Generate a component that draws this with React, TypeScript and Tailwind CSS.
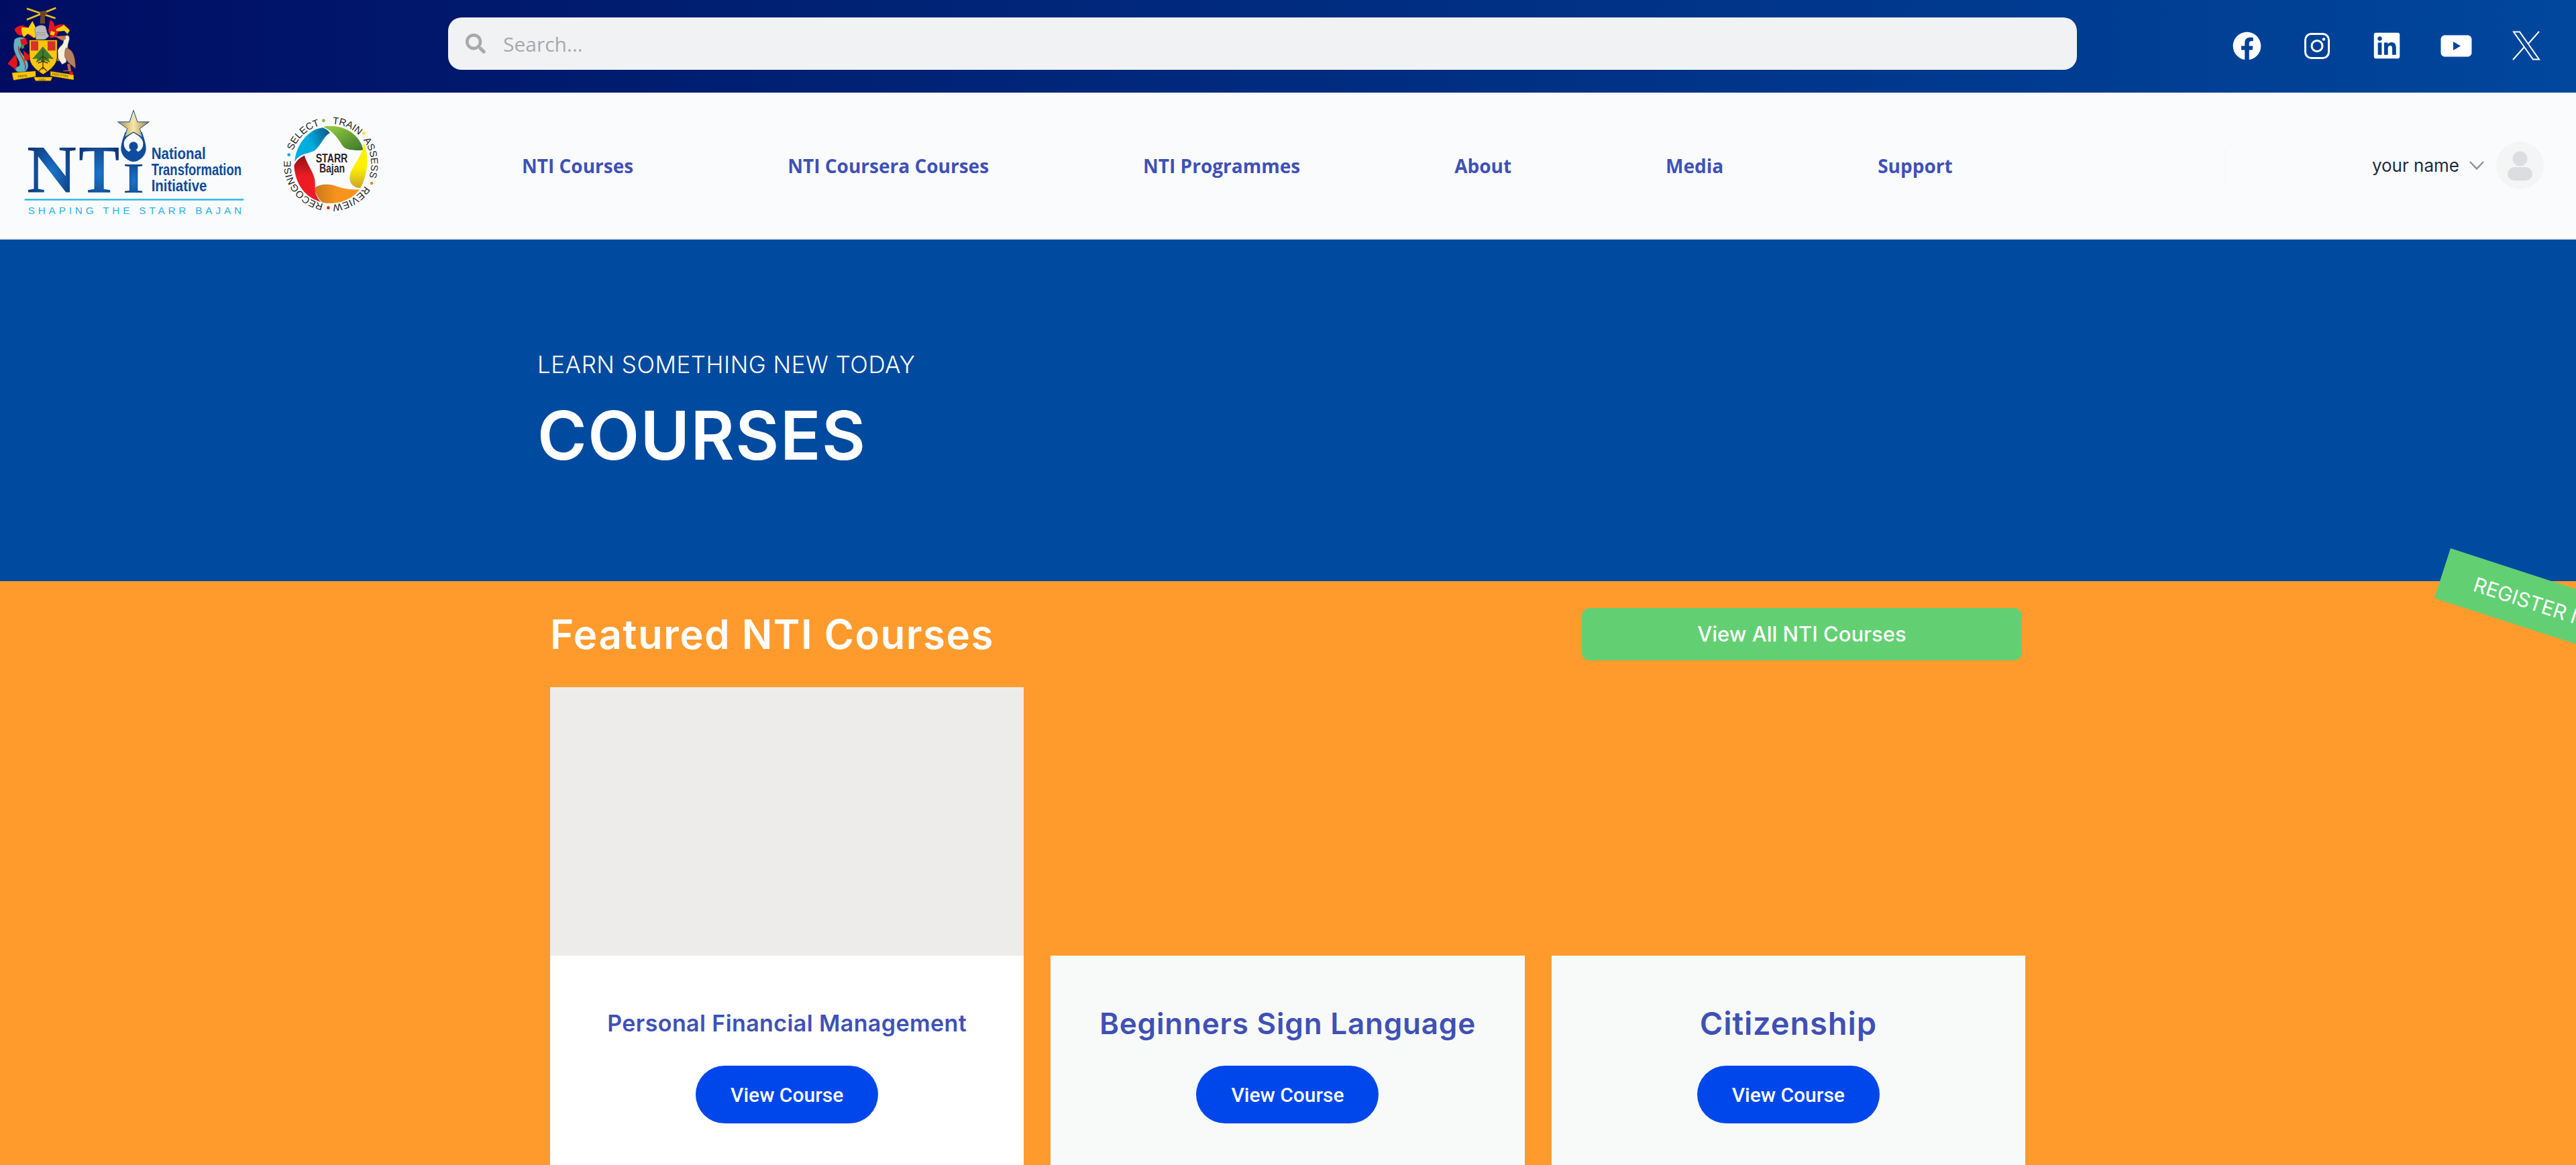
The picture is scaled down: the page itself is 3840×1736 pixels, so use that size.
import { FaFacebook, FaLinkedin, FaSearch } from "react-icons/fa";

const NAV_ITEMS = ["NTI Courses", "NTI Coursera Courses", "NTI Programmes", "About", "Media", "Support"];

const COURSES = [
  { title: "Personal Financial Management", image: true, titleClass: "text-[34px] tracking-[0.4px]", bodyClass: "bg-white" },
  { title: "Beginners Sign Language", image: false, titleClass: "text-[44px] tracking-[0.8px]", bodyClass: "bg-[#f8faf9]" },
  { title: "Citizenship", image: false, titleClass: "text-[47px] tracking-[0.9px]", bodyClass: "bg-[#f8faf9]" },
];

function CoatOfArms() {
  return (
    <svg viewBox="0 0 390 390" className="w-[130px] h-[130px] shrink-0">
      {/* crossed cane and arm */}
      <path d="M120 38L248 82M120 88L250 35" stroke="#e8c21a" strokeWidth="8" />
      <path d="M176 52l30-4 6 14-12 8 2 36h-24l4-36z" fill="#6e4524" />
      {/* mantling */}
      <path d="M65 132c10-14 28-22 44-16l24 14 24 28-8 12-28-18-16 4c-14 6-30 2-40-24z" fill="#e8141c" />
      <path d="M97 122l30 2 18-30 12 24 8 24-4 22-8 6-14-12-14-8-18 16c-10-10-12-30-10-44z" fill="#fcd20e" />
      <path d="M216 134l8-44c14 4 18 14 20 28 14-8 30-12 44-8l24 22-28 4-22 4-12 26-24 4z" fill="#e8141c" />
      <path d="M254 128c12-6 24-8 30-18l28 26-10 16-14-14-24 2-14-2z" fill="#fcd20e" />
      <path d="M228 138l18 6-6 16-16-6z" fill="#fcd20e" />
      {/* helmet */}
      <path d="M155 130c6-16 32-22 48-12l8 30 8 14-18 14-26 8-14-8-2-22z" fill="#b9babc" stroke="#77787a" strokeWidth="2" />
      <path d="M160 146h44M160 156h44" stroke="#88898b" strokeWidth="2" />
      {/* dolphin */}
      <path d="M64 178c8-12 32-16 50-6l6 24-24 10-8 14c6 20 26 34 36 60 6 22-2 40-24 46-18 0-30-8-38-24l22-6c6-6 4-14 0-24-10-20-28-50-22-78z" fill="#62b5bf" stroke="#1d4f55" strokeWidth="2" />
      <path d="M84 206c-6 20 10 40 20 60 8 18 14 34 8 46" fill="none" stroke="#c9302c" strokeWidth="5" />
      <path d="M34 285l36-44 8 36-6 34zM104 226l30 22 4 18-28 6zM90 176l26-4 8 24-26 14z" fill="#e3131b" />
      <path d="M92 204l14-6 2 16-10 6z" fill="#2ca53a" />
      {/* pelican */}
      <path d="M290 162c12-8 22-2 20 12-2 16-10 28-6 44l-8 60-18 10-18-26-2-34c4-20 26-24 26-44z" fill="#f6f1dd" stroke="#6e6552" strokeWidth="2" />
      <path d="M296 214c24 6 40 24 42 92l-34-28-14-24c0-16 0-30 6-40z" fill="#b9805c" stroke="#5d4330" strokeWidth="2" />
      <path d="M244 162l50-2v14l-14 8z" fill="#c9794a" />
      <path d="M300 286l5 28-24 2 4 3h34l-6-33z" fill="#c7653c" />
      <path d="M246 256l16 4 4 14-16-2z" fill="#b9673c" />
      {/* motto scroll */}
      <path d="M53 325l107-8v26l-100 16z" fill="#fbc70f" stroke="#3f2e06" strokeWidth="2" />
      <path d="M150 344h85l-8 18h-68z" fill="#fbc70f" stroke="#3f2e06" strokeWidth="2" />
      <path d="M225 318l105 16v24l-105-18z" fill="#fbc70f" stroke="#3f2e06" strokeWidth="2" />
      <path d="M310 320h16v14h-16z" fill="#d5201f" />
      {/* shield */}
      <path d="M131 178h125v76c0 36-32 60-63 79-31-19-62-43-62-79z" fill="#fcc510" stroke="#201a08" strokeWidth="3" />
      <rect x="138" y="184" width="33" height="42" fill="#d5332a" />
      <rect x="213" y="184" width="35" height="42" fill="#d5332a" />
      <path d="M192 208l22 26 26 30-24-2 8 18-22-10-10 12-10-12-22 10 8-18-24 2 26-30z" fill="#3c7d2c" />
      <path d="M192 226v84M192 300l-18 18M192 300l18 18M192 252l-16 10M192 252l16 10M192 274l-22 8M192 274l22 8" stroke="#4a3014" strokeWidth="4" fill="none" />
      <g fontFamily="Liberation Serif, serif" fontSize="15" fill="#3a2a06">
        <text x="80" y="347" transform="rotate(-6 80 347)">PRIDE</text>
        <text x="170" y="359">AND</text>
        <text x="232" y="335" transform="rotate(9 232 335)">INDUSTRY</text>
      </g>
    </svg>
  );
}

function NtiLogo() {
  return (
    <svg viewBox="0 0 1020 525" className="w-[340px] h-[175px] shrink-0">
      <defs>
        <radialGradient id="ntiBlue" cx="50%" cy="55%" r="60%">
          <stop offset="0%" stopColor="#1a75cc" />
          <stop offset="100%" stopColor="#0a2e6c" />
        </radialGradient>
        <linearGradient id="ntiGold" x1="0" y1="0" x2="1" y2="0">
          <stop offset="0%" stopColor="#b08a38" />
          <stop offset="50%" stopColor="#f6e7ac" />
          <stop offset="100%" stopColor="#a07e30" />
        </linearGradient>
      </defs>
      <g fontFamily="Liberation Serif, serif" fontWeight="700" fill="url(#ntiBlue)">
        <text x="30" y="395" fontSize="303" textLength="222" lengthAdjust="spacingAndGlyphs">N</text>
        <text x="262" y="395" fontSize="303" textLength="183" lengthAdjust="spacingAndGlyphs">T</text>
        <text x="460" y="395" fontSize="192" textLength="95" lengthAdjust="spacingAndGlyphs">I</text>
      </g>
      <path d="M470 125C455 165 448 190 452 210C458 240 490 258 507 258C525 258 556 240 562 210C566 190 558 165 545 125Z" fill="#0f4c9e" />
      <path d="M507 128C530 142 552 155 550 180C549 200 535 212 523 214H491C479 212 465 200 464 180C462 155 484 142 507 128Z" fill="#fafbfd" />
      <circle cx="507" cy="189" r="20" fill="#0f4c9e" />
      <rect x="488" y="206" width="38" height="34" rx="10" fill="#0f4c9e" />
      <path d="M507 28L525 80H577L535 110L548 150L507 125L466 150L479 110L437 80H489Z" fill="url(#ntiGold)" stroke="#0f4c9e" strokeWidth="3" />
      <g fontFamily="Liberation Sans, sans-serif" fontWeight="700" fontSize="70" fill="#0f4a9a">
        <text x="587" y="247" textLength="243" lengthAdjust="spacingAndGlyphs">National</text>
        <text x="587" y="318" textLength="403" lengthAdjust="spacingAndGlyphs">Transformation</text>
        <text x="587" y="390" textLength="248" lengthAdjust="spacingAndGlyphs">Initiative</text>
      </g>
      <rect x="20" y="424" width="980" height="7" fill="#22b2e6" />
      <text x="35" y="493" textLength="955" fontFamily="Liberation Sans, sans-serif" fontSize="46" fill="#25b4ea">
        SHAPING THE STARR BAJAN
      </text>
    </svg>
  );
}

function StarrLogo() {
  const petals = [
    { id: "starrGreen", from: "#8cc63f", to: "#3f7a2a", x1: 0.2, y1: 0.1, x2: 1, y2: 0.9, d: "M215 78C280 62 375 95 395 182C372 182 320 190 300 160C280 125 255 95 215 78Z" },
    { id: "starrYellow", from: "#fff000", to: "#c9a52a", x1: 0.5, y1: 0.55, x2: 0.5, y2: 1, d: "M398 150C425 220 410 300 382 352C358 352 325 335 336 290C345 250 392 210 398 150Z" },
    { id: "starrOrange", from: "#c9781a", to: "#f7941d", x1: 0, y1: 0.5, x2: 0.5, y2: 0.5, d: "M378 358C340 410 270 428 212 416C190 395 178 370 178 350C205 330 245 332 280 345C315 358 345 360 378 358Z" },
    { id: "starrRed", from: "#8e0f16", to: "#ed1c24", x1: 0.5, y1: 0, x2: 0.5, y2: 0.45, d: "M205 414C140 395 90 340 85 250C95 230 115 212 132 206C140 240 170 275 178 315C182 350 170 378 205 414Z" },
    { id: "starrBlue", from: "#00aee0", to: "#0a5f8e", x1: 0.45, y1: 0.5, x2: 1, y2: 0.3, d: "M88 235C92 160 150 88 212 82C225 85 238 95 246 106C220 115 205 165 175 185C145 200 110 195 88 235Z" },
  ];
  const words = [
    { word: "TRAIN", at: 56.4 },
    { word: "ASSESS", at: 72.5 },
    { word: "REVIEW", at: 91.7 },
    { word: "RECOGNISE", at: 14.7 },
    { word: "SELECT", at: 38 },
  ];
  const dots = [
    { x: 217, y: 50, fill: "#7bbc3f" },
    { x: 397, y: 107, fill: "#fde800" },
    { x: 432, y: 330, fill: "#f58a1f" },
    { x: 238, y: 440, fill: "#e81f2a" },
    { x: 62, y: 203, fill: "#0aa9e3" },
  ];
  return (
    <svg viewBox="0 0 495 495" className="w-[165px] h-[165px] shrink-0">
      <defs>
        <path id="starrRing" d="M250 425A180 180 0 1 1 250.010 425" fill="none" />
        {petals.map((p) => (
          <linearGradient key={p.id} id={p.id} x1={p.x1} y1={p.y1} x2={p.x2} y2={p.y2}>
            <stop offset="0%" stopColor={p.from} />
            <stop offset="100%" stopColor={p.to} />
          </linearGradient>
        ))}
      </defs>
      {petals.map((p) => (
        <path key={p.id} d={p.d} fill={`url(#${p.id})`} />
      ))}
      {dots.map((d) => (
        <circle key={d.fill} cx={d.x} cy={d.y} r="7" fill={d.fill} />
      ))}
      <g fontFamily="Liberation Sans, sans-serif" fontSize="44" fill="#231f20" textAnchor="middle">
        {words.map((w) => (
          <text key={w.word}>
            <textPath href="#starrRing" startOffset={`${w.at}%`}>
              {w.word}
            </textPath>
          </text>
        ))}
      </g>
      <g fontFamily="Liberation Sans, sans-serif" fontWeight="700" fontSize="55" fill="#2a2627">
        <text x="182" y="238" textLength="143" lengthAdjust="spacingAndGlyphs">STARR</text>
        <text x="198" y="283" textLength="114" lengthAdjust="spacingAndGlyphs">Bajan</text>
      </g>
    </svg>
  );
}

function SocialIcons() {
  return (
    <div className="flex items-center text-white">
      <FaFacebook className="w-[43px] h-[43px]" />
      <svg viewBox="0 0 38 39" className="w-[38px] h-[39px] ml-[64px]" fill="none" stroke="white">
        <rect x="1.500" y="1.500" width="35" height="36" rx="9" strokeWidth="3" />
        <circle cx="19" cy="19.500" r="8" strokeWidth="3" />
        <circle cx="29" cy="9.500" r="2.300" fill="white" stroke="none" />
      </svg>
      <FaLinkedin className="w-[44px] h-[44px] ml-[63px]" />
      <svg viewBox="0 0 47 33" className="w-[47px] h-[33px] ml-[58px]">
        <path
          fillRule="evenodd"
          d="M7 0.500H40C44 0.500 46.500 3 46.500 7V26C46.500 30 44 32.500 40 32.500H7C3 32.500 0.500 30 0.500 26V7C0.500 3 3 0.500 7 0.500ZM19 10V23L30 16.500Z"
          fill="white"
        />
      </svg>
      <svg viewBox="0 0 42 44" className="w-[42px] h-[44px] ml-[60px]" fill="none" stroke="white" strokeWidth="2">
        <path d="M2 1.500H11L40 42.500H31Z" />
        <path d="M40 1L24 19M1 43L18 24" />
      </svg>
    </div>
  );
}

export default function App() {
  return (
    <div className="relative w-full h-[1736px] overflow-hidden flex flex-col bg-[#ff9b2d] font-['Inter',sans-serif]">
      {/* Top bar */}
      <div className="h-[138px] shrink-0 flex items-center bg-gradient-to-r from-[#000c62] to-[#00479d]">
        <div className="mt-[-8px]">
          <CoatOfArms />
        </div>
        <div className="ml-[538px] w-[2428px] h-[78px] mt-[-8px] rounded-[20px] bg-[#f1f2f4] flex items-center pl-[26px]">
          <FaSearch className="w-[30px] h-[30px] text-[#a9a9a9]" />
          <span className="ml-[26px] text-[30px] font-['Open_Sans',sans-serif] text-[#a9a9a9]">Search...</span>
        </div>
        <div className="ml-[232px] mt-[-2px]">
          <SocialIcons />
        </div>
      </div>

      {/* Main nav */}
      <div className="h-[219px] shrink-0 flex items-center bg-[#fafbfd] border-b-2 border-[#e5e7eb]">
        <div className="ml-[30px] mt-[-8px]">
          <NtiLogo />
        </div>
        <div className="ml-[40px] mt-[-2px]">
          <StarrLogo />
        </div>
        <nav className="ml-[203px] flex items-center gap-[230px]">
          {NAV_ITEMS.map((item) => (
            <span key={item} className="text-[28px] leading-[40px] font-bold whitespace-nowrap font-['Open_Sans',sans-serif] text-[#3f51b5]">
              {item}
            </span>
          ))}
        </nav>
        <div className="ml-[405px] w-[2px] h-[50px] bg-[#f7f7f9]" />
        <div className="ml-auto mr-[48px] flex items-center">
          <span className="text-[26px] text-[#1a2b42] whitespace-nowrap">your name</span>
          <svg viewBox="0 0 22 13" className="w-[22px] h-[13px] ml-[15px]" fill="none" stroke="#8f9195" strokeWidth="2.500">
            <path d="M1 1L11 11.500L21 1" />
          </svg>
          <div className="ml-[18px] w-[71px] h-[71px] rounded-full bg-[#f5f5f6] flex items-center justify-center">
            <svg viewBox="0 0 37 44" className="w-[37px] h-[44px]">
              <ellipse cx="18.500" cy="11.500" rx="11" ry="11" fill="#dcdde0" />
              <rect x="0" y="24" width="37" height="20" rx="10" fill="#dcdde0" />
            </svg>
          </div>
        </div>
      </div>

      {/* Hero */}
      <div className="h-[509px] shrink-0 bg-[#004a9f] pl-[801px] pt-[160px] text-white">
        <p className="text-[35px] leading-[52px] font-light tracking-[0.5px] whitespace-nowrap">LEARN SOMETHING NEW TODAY</p>
        <h1 className="mt-[25px] text-[100px] leading-[110px] font-semibold tracking-[1.5px] whitespace-nowrap">COURSES</h1>
      </div>

      {/* Featured courses */}
      <div className="ml-[820px] w-[2199px]">
        <div className="h-[158px] flex items-center justify-between">
          <h2 className="text-[60px] font-semibold tracking-[1.5px] text-white whitespace-nowrap">Featured NTI Courses</h2>
          <button className="mr-[5px] w-[656px] h-[78px] rounded-[12px] bg-[#62d072] text-[31px] font-medium text-white">
            View All NTI Courses
          </button>
        </div>
        <div className="grid grid-cols-3 gap-[40px]">
          {COURSES.map((course) => (
            <div key={course.title} className="flex flex-col">
              <div className={course.image ? "h-[400px] bg-[#edecea]" : "h-[400px]"} />
              <div className={`h-[312px] flex flex-col items-center pt-[73px] ${course.bodyClass}`}>
                <h3 className={`h-[56px] leading-[56px] font-semibold text-[#3f51b5] whitespace-nowrap ${course.titleClass}`}>
                  {course.title}
                </h3>
                <button className="mt-[35px] w-[272px] h-[86px] rounded-full bg-[#0047eb] text-[30px] font-medium text-white font-['Roboto',sans-serif]">
                  View Course
                </button>
              </div>
            </div>
          ))}
        </div>
      </div>

      {/* Register ribbon */}
      <div className="absolute left-[3653px] top-[817px] w-[320px] h-[78px] origin-top-left rotate-[18deg] bg-[#62d072] flex items-center pl-[50px] text-[30px] text-white whitespace-nowrap">
        REGISTER NOW
      </div>
    </div>
  );
}
